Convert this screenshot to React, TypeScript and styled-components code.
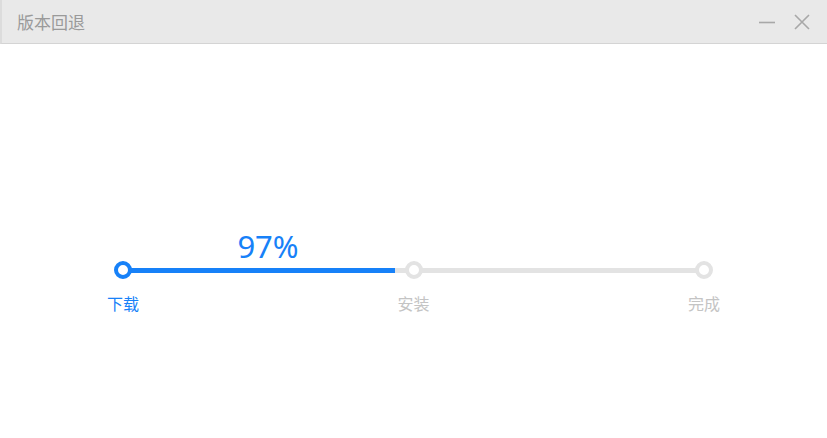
import React from "react";
import styled, { createGlobalStyle } from "styled-components";

const Global = createGlobalStyle`
  html, body { margin: 0; padding: 0; background: #ffffff; }
  body { font-family: "Noto Sans CJK SC", "Noto Sans", sans-serif; }
`;

const Window = styled.div`
  width: 827px;
  height: 438px;
  display: flex;
  flex-direction: column;
  background: #ffffff;
  overflow: hidden;
`;

const TitleBar = styled.div`
  height: 43px;
  flex: none;
  display: flex;
  align-items: center;
  justify-content: space-between;
  background: #e9e9e9;
  border-bottom: 1px solid #d4d4d4;
  border-left: 2px solid #dcdcdc;
  padding: 0 16px 0 15px;
`;

const Title = styled.div`
  font-size: 17px;
  line-height: 20px;
  color: #9a9a9a;
`;

const Controls = styled.div`
  display: flex;
  align-items: center;
  gap: 16px;
`;

const CtrlBtn = styled.div`
  width: 19px;
  height: 19px;
  display: flex;
  align-items: center;
  justify-content: center;
`;

const Body = styled.div`
  flex: 1;
  padding: 217px 0 0 103px;
`;

const Stepper = styled.div`
  position: relative;
  width: 621px;
  display: flex;
  justify-content: space-between;
`;

const Track = styled.div`
  position: absolute;
  left: 20px;
  right: 20px;
  top: 7px;
  height: 5px;
  background: #e3e3e3;
`;

const Fill = styled.div`
  height: 100%;
  background: #1781f8;
`;

const Percent = styled.div`
  position: absolute;
  top: -31px;
  left: 20px;
  width: 290px;
  text-align: center;
  font-family: "Noto Sans", "Open Sans", sans-serif;
  font-size: 31px;
  line-height: 32px;
  color: #1781f8;
`;

const Node = styled.div`
  width: 40px;
  display: flex;
  flex-direction: column;
  align-items: center;
  position: relative;
  z-index: 1;
`;

const Dot = styled.div<{ $active?: boolean }>`
  width: 10px;
  height: 10px;
  border-radius: 50%;
  background: #fff;
  border: 4px solid ${(p) => (p.$active ? "#1781f8" : "#e3e3e3")};
`;

const Label = styled.div<{ $active?: boolean }>`
  margin-top: 14px;
  font-size: 16px;
  line-height: 20px;
  white-space: nowrap;
  color: ${(p) => (p.$active ? "#1781f8" : "#c4c4c4")};
`;

export default function App() {
  const percent = 97;
  const fillRatio = 272 / 581;
  const steps = [
    { label: "下载", active: true },
    { label: "安装", active: false },
    { label: "完成", active: false },
  ];
  return (
    <>
      <Global />
      <Window>
        <TitleBar>
          <Title>版本回退</Title>
          <Controls>
            <CtrlBtn>
              <svg width="18" height="18" viewBox="0 0 18 18">
                <line x1="1" y1="9.5" x2="17" y2="9.5" stroke="#a8a8a8" strokeWidth="1.6" />
              </svg>
            </CtrlBtn>
            <CtrlBtn>
              <svg width="18" height="18" viewBox="0 0 18 18">
                <path d="M2 2 L16 16 M16 2 L2 16" stroke="#a8a8a8" strokeWidth="1.6" fill="none" />
              </svg>
            </CtrlBtn>
          </Controls>
        </TitleBar>
        <Body>
          <Stepper>
            <Track>
              <Fill style={{ width: `${fillRatio * 100}%` }} />
            </Track>
            <Percent>{percent}%</Percent>
            {steps.map((s) => (
              <Node key={s.label}>
                <Dot $active={s.active} />
                <Label $active={s.active}>{s.label}</Label>
              </Node>
            ))}
          </Stepper>
        </Body>
      </Window>
    </>
  );
}
